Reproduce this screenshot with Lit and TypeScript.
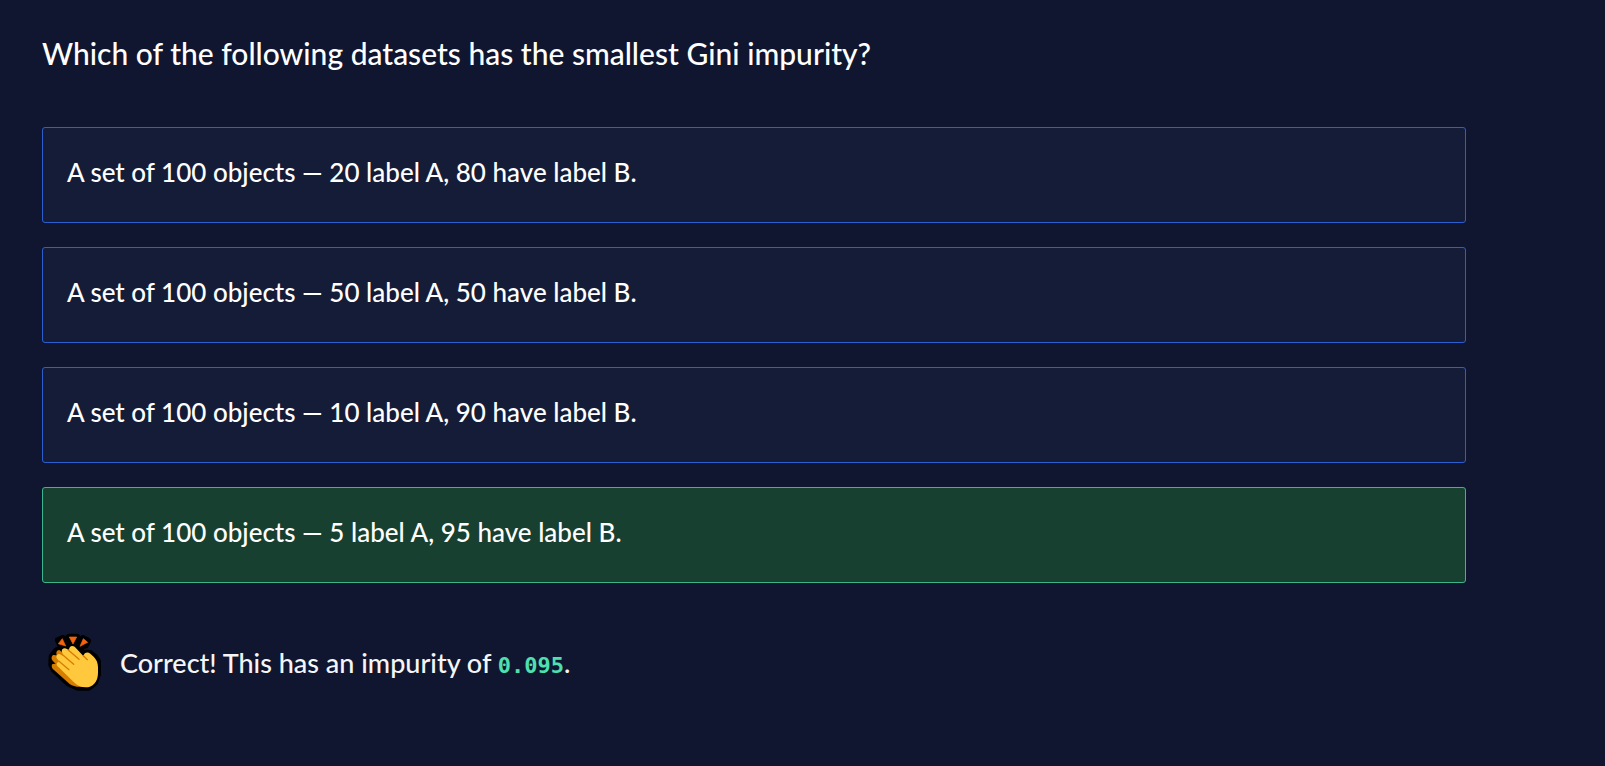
import { LitElement, html, css } from "lit";
import { customElement, state } from "lit/decorators.js";

@customElement("clap-icon")
export class ClapIcon extends LitElement {
  static styles = css`
    :host {
      display: block;
      flex: none;
      width: 54px;
      height: 58px;
    }
    .art {
      display: block;
      width: 100%;
      height: 100%;
      overflow: visible;
    }
  `;

  render() {
    return html`
      <svg class="art" viewBox="24 30 162 174" role="img" aria-label="Clapping hands">
        <g stroke="#000" stroke-width="20" stroke-linejoin="round" fill="#000">
          <path d="M55 49L69 43L78 65L61 62Z" />
          <path d="M87 39H110L103 60H95Z" />
          <path d="M129 43L143 51L136 64L119 67Z" />
          <path d="M36 97L50 80L72 71L90 66L101 64L130 88L148 87L164 99L173 112V150L164 176L146 190H112L86 178L42 137L35 122Z" />
        </g>
        <path d="M55 59L67 44L77 66Z" fill="#f7630c" stroke="#f7630c" stroke-width="2" stroke-linejoin="round" />
        <path d="M88 39H110L99 60Z" fill="#f7630c" stroke="#f7630c" stroke-width="2" stroke-linejoin="round" />
        <path d="M130 44L143 55L120 67Z" fill="#f7630c" stroke="#f7630c" stroke-width="2" stroke-linejoin="round" />
        <path
          fill="#d67d00"
          d="M36 97C38 91 44 93 50 94C48 86 49 79 58 78L110 118L128 188C110 190 99 186 89 180L42 138C35 133 33 124 38 120L47 119L38 110C34 106 34 101 36 97Z"
        />
        <path
          fill="#ffc83d"
          d="M67 76C70 72 76 71 81 75L87 79C86 68 95 62 104 68L130 96C133 85 143 83 151 89L161 98C169 106 174 116 174 130V146C174 174 158 190 137 190C122 190 111 184 101 174L53 127C47 121 51 112 59 113L52 105C44 97 54 86 63 92L69 96L67 87C65 83 65 79 67 76Z"
        />
        <g fill="none" stroke="#d67d00" stroke-width="4" stroke-linecap="round">
          <path d="M84 77L117 106" />
          <path d="M65 90L101 121" />
          <path d="M57 112L87 137" />
          <path d="M130 95L142 107" />
        </g>
      </svg>
    `;
  }
}

@customElement("app-root")
export class AppRoot extends LitElement {
  static styles = css`
    :host {
      display: block;
      box-sizing: border-box;
      min-height: 100vh;
      padding: 35px 139px 24px 42px;
      background: #10162f;
      color: #fff;
      font-family: Lato, "Liberation Sans", sans-serif;
      font-size: 26px;
      font-weight: 500;
      line-height: 36px;
    }
    .question {
      margin: 0 0 56px;
      font-size: 30px;
      font-weight: 500;
      line-height: 36px;
    }
    .options {
      display: flex;
      flex-direction: column;
      gap: 24px;
      margin: 0;
      padding: 0;
      list-style: none;
    }
    .option {
      display: block;
      box-sizing: border-box;
      width: 100%;
      padding: 26px 24px 32px;
      border: 1px solid #2b5fd0;
      border-radius: 3px;
      background: #151c38;
      color: inherit;
      font: inherit;
      text-align: left;
      cursor: pointer;
    }
    .option.correct {
      border-color: #3db58c;
      background: #184031;
    }
    .feedback {
      display: flex;
      align-items: center;
      gap: 18px;
      margin-top: 51px;
      padding-left: 6px;
    }
    .message {
      margin: 0;
      color: #f5f5f7;
      font-size: 27px;
    }
    .value {
      color: #4fe0b0;
      font-family: "DejaVu Sans Mono", monospace;
      font-size: 22px;
      font-weight: 700;
      line-height: 1;
    }
  `;

  @state() private selected = 3;

  private readonly correct = 3;

  private readonly options = [
    "A set of 100 objects — 20 label A, 80 have label B.",
    "A set of 100 objects — 50 label A, 50 have label B.",
    "A set of 100 objects — 10 label A, 90 have label B.",
    "A set of 100 objects — 5 label A, 95 have label B.",
  ];

  render() {
    const solved = this.selected === this.correct;
    return html`
      <h1 class="question" id="question">Which of the following datasets has the smallest Gini impurity?</h1>
      <ul class="options" aria-labelledby="question">
        ${this.options.map(
          (text, i) => html`
            <li>
              <button
                type="button"
                class="option ${solved && i === this.correct ? "correct" : ""}"
                aria-pressed=${i === this.selected}
                @click=${() => (this.selected = i)}
              >${text}</button>
            </li>
          `
        )}
      </ul>
      ${solved
        ? html`
            <div class="feedback" role="status">
              <clap-icon></clap-icon>
              <p class="message">Correct! This has an impurity of <code class="value">0.095</code>.</p>
            </div>
          `
        : null}
    `;
  }
}
